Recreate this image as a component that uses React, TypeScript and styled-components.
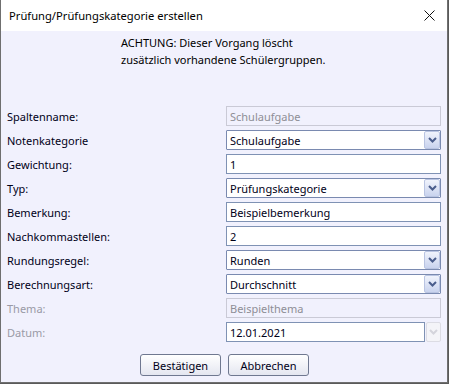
import React from 'react';
import styled, {createGlobalStyle} from "styled-components";

const GlobalStyle = createGlobalStyle`
    html, body {
        margin: 0;
        padding: 0;
        background: #5a5a5a;
    }
    * {
        box-sizing: border-box;
    }
`;

type Row = {
    label: string;
    kind: "text" | "combo" | "date";
    value: string;
    disabled?: boolean;
    dimLabel?: boolean;
};

const rows: Row[] = [
    {label: "Spaltenname:", kind: "text", value: "Schulaufgabe", disabled: true},
    {label: "Notenkategorie", kind: "combo", value: "Schulaufgabe"},
    {label: "Gewichtung:", kind: "text", value: "1"},
    {label: "Typ:", kind: "combo", value: "Prüfungskategorie"},
    {label: "Bemerkung:", kind: "text", value: "Beispielbemerkung"},
    {label: "Nachkommastellen:", kind: "text", value: "2"},
    {label: "Rundungsregel:", kind: "combo", value: "Runden"},
    {label: "Berechnungsart:", kind: "combo", value: "Durchschnitt"},
    {label: "Thema:", kind: "text", value: "Beispielthema", disabled: true, dimLabel: true},
    {label: "Datum:", kind: "date", value: "12.01.2021", dimLabel: true},
];

const Chevron = ({color}: { color: string }) => (
    <svg width="9" height="6" viewBox="0 0 9 6">
        <path d="M1 1 L4.5 4.5 L8 1" fill="none" stroke={color} strokeWidth="2"/>
    </svg>
);

export default function App() {
    return (
        <>
            <GlobalStyle/>
            <StyledWindow>
                <StyledTitleBar>
                    <StyledTitle>Prüfung/Prüfungskategorie erstellen</StyledTitle>
                    <StyledClose>
                        <svg width="11" height="11" viewBox="0 0 11 11">
                            <path d="M0.5 0.5 L10.5 10.5 M10.5 0.5 L0.5 10.5" stroke="#111" strokeWidth="1"/>
                        </svg>
                    </StyledClose>
                </StyledTitleBar>
                <StyledBody>
                    <StyledNotice>
                        ACHTUNG: Dieser Vorgang löscht<br/>
                        zusätzlich vorhandene Schülergruppen.
                    </StyledNotice>
                    <StyledForm>
                        {rows.map(row => (
                            <React.Fragment key={row.label}>
                                <StyledLabel $disabled={row.dimLabel}>{row.label}</StyledLabel>
                                {row.kind === "text" && (
                                    <StyledTextBox $disabled={row.disabled}>{row.value}</StyledTextBox>
                                )}
                                {row.kind === "combo" && (
                                    <StyledCombo>
                                        <StyledComboText>{row.value}</StyledComboText>
                                        <StyledComboButton>
                                            <Chevron color="#4a5d8c"/>
                                        </StyledComboButton>
                                    </StyledCombo>
                                )}
                                {row.kind === "date" && (
                                    <StyledDateField>
                                        <StyledTextBox>{row.value}</StyledTextBox>
                                        <StyledDateButton>
                                            <Chevron color="#d4d4dc"/>
                                        </StyledDateButton>
                                    </StyledDateField>
                                )}
                            </React.Fragment>
                        ))}
                    </StyledForm>
                    <StyledButtonsGroup>
                        <StyledButton>Bestätigen</StyledButton>
                        <StyledButton>Abbrechen</StyledButton>
                    </StyledButtonsGroup>
                </StyledBody>
            </StyledWindow>
        </>
    );
}

const StyledWindow = styled.div`
    width: 448px;
    height: 383px;
    border: 1px solid #6f6f6f;
    border-top: none;
    display: flex;
    flex-direction: column;
    font-family: "Noto Sans", "DejaVu Sans", sans-serif;
    font-size: 11px;
    color: #000018;
    background: #f1f1fd;
`;

const StyledTitleBar = styled.div`
    height: 31px;
    background: #ffffff;
    display: flex;
    align-items: center;
    justify-content: space-between;
    padding: 0 10px 0 8px;
`;

const StyledTitle = styled.div`
    font-size: 11.2px;
    color: #000;
`;

const StyledClose = styled.div`
    display: flex;
    align-items: center;
    padding-right: 2px;
`;

const StyledBody = styled.div`
    flex: 1;
    display: flex;
    flex-direction: column;
    padding: 3px 6px 0 6px;
`;

const StyledNotice = styled.div`
    margin-left: 114px;
    line-height: 17px;
    color: #000;
`;

const StyledForm = styled.div`
    display: grid;
    grid-template-columns: 219px 215px;
    grid-auto-rows: 20px;
    row-gap: 4px;
    margin-top: 38px;
`;

const StyledLabel = styled.div<{ $disabled?: boolean }>`
    display: flex;
    align-items: center;
    color: ${props => props.$disabled ? "#9a9aa6" : "#000018"};
`;

const StyledTextBox = styled.div<{ $disabled?: boolean }>`
    flex: 1;
    height: 20px;
    display: flex;
    align-items: center;
    padding: 0 3px;
    background: ${props => props.$disabled ? "#f1f1fd" : "#ffffff"};
    border: 1px solid ${props => props.$disabled ? "#cacad6" : "#7f92b4"};
    color: ${props => props.$disabled ? "#8e8e96" : "#000018"};
`;

const StyledCombo = styled.div`
    display: flex;
    align-items: stretch;
    background: #ffffff;
    border: 1px solid #7a8ab0;
    border-radius: 1px;
`;

const StyledComboText = styled.div`
    flex: 1;
    display: flex;
    align-items: center;
    padding: 0 3px;
`;

const StyledComboButton = styled.div`
    width: 16px;
    display: flex;
    align-items: center;
    justify-content: center;
    background: linear-gradient(#f0f3fc, #c9d3ee);
    border: 1px solid #b9c4e2;
    border-radius: 2px;
`;

const StyledDateField = styled.div`
    display: flex;
    gap: 1px;
`;

const StyledDateButton = styled.div`
    width: 15px;
    display: flex;
    align-items: center;
    justify-content: center;
    background: #f4f4f8;
    border: 1px solid #dcdce4;
    border-radius: 2px;
`;

const StyledButtonsGroup = styled.div`
    display: flex;
    justify-content: center;
    gap: 7px;
    margin-top: 12px;
    padding-left: 1px;
`;

const StyledButton = styled.div`
    width: 81px;
    height: 22px;
    display: flex;
    align-items: center;
    justify-content: center;
    border: 1px solid #6f7890;
    border-radius: 3px;
    background: linear-gradient(#ffffff, #e4e6f0);
    color: #000018;
`;
